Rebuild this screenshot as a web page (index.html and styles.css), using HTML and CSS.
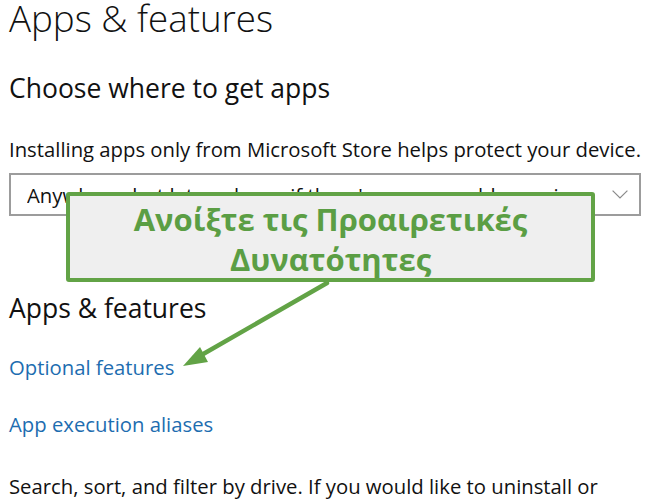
FILE: index.html
```html
<!DOCTYPE html>
<html lang="en">
<head>
<meta charset="utf-8">
<title>Apps &amp; features</title>
<link rel="stylesheet" href="styles.css">
</head>
<body>
<main class="page">
  <h1 class="title">Apps &amp; features</h1>
  <h2 class="subtitle choose">Choose where to get apps</h2>
  <p class="text installing">Installing apps only from Microsoft Store helps protect your device.</p>
  <div class="dropdown">
    <span class="dropdown-value">Anywhere, but let me know if there's a comparable app in the Microsoft Store</span>
    <svg class="chevron" viewBox="0 0 16 9" width="16" height="9"><path d="M0.6 0.6 L8 8 L15.4 0.6" fill="none" stroke="#8a8a8a" stroke-width="1.2"/></svg>
  </div>
  <h2 class="subtitle apps">Apps &amp; features</h2>
  <a class="link optional" href="#">Optional features</a>
  <a class="link aliases" href="#">App execution aliases</a>
  <p class="text search">Search, sort, and filter by drive. If you would like to uninstall or</p>

  <div class="callout">
    <span>Ανοίξτε τις Προαιρετικές</span>
    <span>Δυνατότητες</span>
  </div>
  <svg class="arrow" viewBox="0 0 650 499" width="650" height="499">
    <line x1="327" y1="283" x2="198" y2="357" stroke="#62a346" stroke-width="4.5" stroke-linecap="round"/>
    <polygon points="183,366 200,347 208,362" fill="#62a346"/>
  </svg>
</main>
</body>
</html>
```
FILE: styles.css
```css
html, body {
  margin: 0;
  padding: 0;
  background: #ffffff;
  overflow: hidden;
}
body {
  width: 650px;
  height: 499px;
  font-family: "Open Sans", "Noto Sans", sans-serif;
  color: #1a1a1a;
}
.page {
  position: relative;
  display: flex;
  flex-direction: column;
  align-items: flex-start;
  padding-left: 9px;
  width: 641px;
  height: 499px;
}
.title {
  margin: -4px 0 0 0;
  font-size: 36.7px;
  line-height: 44px;
  font-weight: 300;
  color: #111;
  white-space: nowrap;
}
.subtitle {
  margin: 0;
  font-size: 26.5px;
  line-height: 30px;
  font-weight: 400;
  color: #111;
  white-space: nowrap;
}
.choose { margin-top: 33px; }
.apps { margin-top: 77px; }
.text {
  margin: 0;
  font-size: 20.3px;
  line-height: 26px;
  color: #111;
  white-space: nowrap;
}
.installing { margin-top: 33px; }
.search { margin-top: 36px; }
.dropdown {
  margin-top: 11px;
  box-sizing: border-box;
  width: 632px;
  height: 43px;
  border: 2px solid #9c9c9c;
  display: flex;
  align-items: center;
  padding: 0 11px 0 16px;
  gap: 15px;
}
.dropdown-value {
  flex: 1;
  min-width: 0;
  white-space: nowrap;
  overflow: hidden;
  text-overflow: ellipsis;
  font-size: 20.3px;
  color: #111;
}
.chevron { flex: none; }
.link {
  font-size: 20.3px;
  line-height: 26px;
  color: #1d6db0;
  text-decoration: none;
  white-space: nowrap;
}
.optional { margin-top: 31px; }
.aliases { margin-top: 31px; }

.callout {
  position: absolute;
  left: 66px;
  top: 192px;
  box-sizing: border-box;
  width: 529px;
  height: 90px;
  padding-top: 3px;
  background: #efefef;
  border: 4px solid #62a346;
  border-radius: 3px;
  display: flex;
  flex-direction: column;
  align-items: center;
  justify-content: center;
  font-family: "Open Sans", "Noto Sans", sans-serif;
  font-weight: 700;
  font-size: 31px;
  line-height: 40px;
  color: #5b9e44;
  white-space: nowrap;
}
.arrow {
  position: absolute;
  left: 0;
  top: 0;
  pointer-events: none;
}
```
